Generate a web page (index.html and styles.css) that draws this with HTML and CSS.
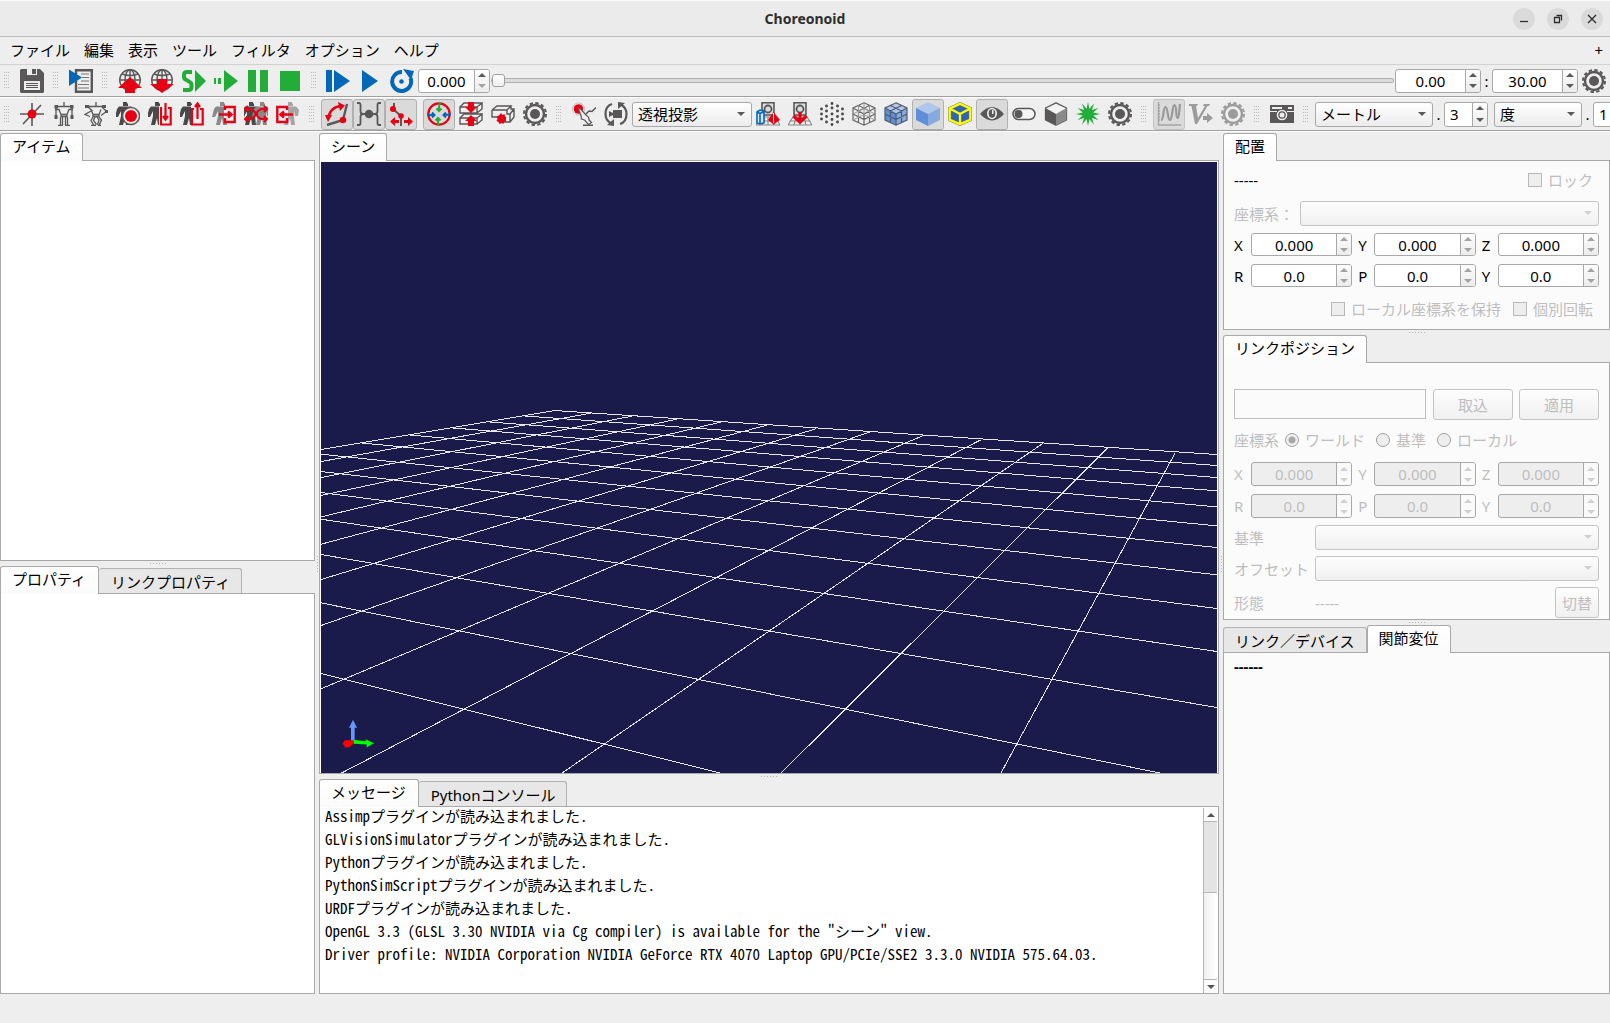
FILE: index.html
```html
<!DOCTYPE html>
<html lang="ja">
<head>
<meta charset="utf-8">
<title>Choreonoid</title>
<link rel="stylesheet" href="styles.css">
</head>
<body>
<svg class="defs" aria-hidden="true">
  <defs>
    <symbol id="save" viewBox="0 0 24 24"><path fill="#595757" d="M1 0H20L24 4V23l-1 1H1l-1-1V1z"/><path fill="#eee" d="M7 0h10v6H7zM4 12h16v9H4z"/><path fill="#595757" d="M12 0h4v5h-4zM6 14h12v1H6zM6 16h12v1H6zM6 18h12v1H6z"/></symbol>
    <symbol id="script" viewBox="0 0 24 24"><path fill="#eee" stroke="#595757" stroke-width="2.4" d="M7 1.2H22.8V22.8H7z"/><path stroke="#777" stroke-width="1.2" d="M12 5h8M13 8.500h7M12 12h8M9 15.500h11M9 19h11"/><path fill="#0068b7" d="M0 0.500 13 8.500 0 17z"/></symbol>
    <symbol id="globe" viewBox="0 0 24 24"><g fill="none" stroke="#595757" stroke-width="1.4"><circle cx="12" cy="11" r="10.300"/><ellipse cx="12" cy="11" rx="5" ry="10.300"/><path d="M12 0.500V21M2 11H22M4 5q8 3 16 0M4 17q8-3 16 0"/></g></symbol>
    <symbol id="globe-up" viewBox="0 0 24 24"><use href="#globe"/><path fill="#e60012" d="M12 8 24 19H17v5H7v-5H0z"/></symbol>
    <symbol id="globe-down" viewBox="0 0 24 24"><use href="#globe"/><path fill="#e60012" d="M7 10h10v5h7L12 24 0 15h7z"/></symbol>
    <symbol id="sim-start" viewBox="0 0 24 24"><path fill="#22ac38" d="M13 1 24 12 13 23z"/><path fill="none" stroke="#22ac38" stroke-width="4" d="M10 3H5Q2 3 2 6V8Q2 10 4.500 11L7 12.500Q9.500 13.500 9.500 16V18Q9.500 21 6.500 21H1"/></symbol>
    <symbol id="sim-restart" viewBox="0 0 24 24"><path fill="#22ac38" d="M0 9h2v6H0zM4 9h3v6H4zM10 1 24 12 10 23z"/></symbol>
    <symbol id="pause" viewBox="0 0 24 24"><path fill="#22ac38" d="M2 1h8v22H2zM14 1h8v22h-8z"/></symbol>
    <symbol id="stop" viewBox="0 0 24 24"><path fill="#22ac38" d="M2 2h20v20H2z"/></symbol>
    <symbol id="resume" viewBox="0 0 24 24"><path fill="#0068b7" d="M0 1h6v22H0zM8 1 24 12 8 23z"/></symbol>
    <symbol id="play" viewBox="0 0 24 24"><path fill="#0068b7" d="M4 1 20 12 4 23z"/></symbol>
    <symbol id="loop" viewBox="0 0 24 24"><path fill="none" stroke="#0068b7" stroke-width="4" d="M12 3A9.500 9.500 0 1 0 20.500 9"/><path fill="#0068b7" d="M13 0 24 2 21 11z"/><circle cx="11.500" cy="12.500" r="2.300" fill="#0068b7"/></symbol>
    <symbol id="gear" viewBox="0 0 24 24"><g fill="none" stroke="currentColor"><circle cx="12" cy="12" r="9" stroke-width="2.400"/><circle cx="12" cy="12" r="11" stroke-width="2" stroke-dasharray="3.400 2.360"/></g><circle cx="12" cy="12" r="5" fill="currentColor"/></symbol>
    <symbol id="origin" viewBox="0 0 24 24"><path stroke="#595757" stroke-width="1.600" d="M0 12H24M12 1V24M3 22 21 3"/><circle cx="12" cy="12" r="4.500" fill="#e60012"/></symbol>
    <symbol id="pose-std" viewBox="0 0 24 24"><g fill="none" stroke="#595757" stroke-width="1.300"><path d="M12 0v4M3 4.500H21M3 7.500h4l2 5h6l2-5h4M9 12.500v2h6v-2M4 4v11M20 4v11M8.500 15V23M15.500 15V23M10.500 15v8M13.500 15v8M6 23.300h5M13 23.300h5"/></g><path fill="#595757" d="M2.500 3h3.500v3.500H2.500zM18 3h3.500v3.500H18zM2.500 13h3v4h-3zM18.500 13h3v4h-3z"/></symbol>
    <symbol id="pose-init" viewBox="0 0 24 24"><g fill="none" stroke="#595757" stroke-width="1.300"><path d="M12 0v4M3 4.500H19M7 7.500l2 5h6l2-5M4 5 8 8.500 1 12.500l5 2M18 5l4.500 4.500L17 13.500M9 12.500v2h6v-2M9 15l-2 3.500 3 5M11 15l-1.500 3.500 3 4M15 15l2.500 3-2.500 5.500M13 15l2 3-1.500 5M7 23.300h5M14 23.300h3"/></g><path fill="#595757" d="M1 3h4v3H1zM18 3h4v3h-4zM21 8h3v3h-3z"/></symbol>
    <symbol id="body" viewBox="0 0 24 24"><path fill="currentColor" d="M9 0h4v4H9zM13 1l1 1v2h-1zM5 4.500H17L20 8l-1 6h-3V9l-1 5 1 9h-4l-1-7-2 7H5l2-9V9l-3 6H1L3 7z"/></symbol>
    <symbol id="pose-mem" viewBox="0 0 24 24"><g color="#4a4848"><use href="#body" x="-2"/></g><circle cx="15" cy="14" r="8.500" fill="#eee" stroke="#595757" stroke-width="1.500"/><circle cx="15" cy="14" r="6" fill="#e60012"/></symbol>
    <symbol id="pose-load" viewBox="0 0 24 24"><g color="#4a4848"><use href="#body" x="-2"/></g><path fill="#eee" d="M11 4h13v20H11z"/><path fill="none" stroke="#e60012" stroke-width="2.200" d="M14 6h-1V22.500H22.700V6H20M17.500 1V17M15 14l2.500 3.500L20 14"/></symbol>
    <symbol id="pose-save" viewBox="0 0 24 24"><g color="#4a4848"><use href="#body" x="-2"/></g><path fill="#eee" d="M11 3h13v21H11z"/><path fill="none" stroke="#e60012" stroke-width="2.200" d="M14 7h-2V22.500H22.700V7H20M17.500 17V2M15 5l2.500-3.500L20 5"/></symbol>
    <symbol id="copy-right" viewBox="0 0 24 24"><g color="#898989"><use href="#body" x="-1"/></g><path fill="#eee" d="M12 4h12v17H12z"/><path fill="none" stroke="#e60012" stroke-width="2.400" d="M13 8V5H22.700V20H13V16M7 12.500H19M16 9.500l3.500 3-3.500 3"/></symbol>
    <symbol id="mirror" viewBox="0 0 24 24"><g color="#4a4848"><use href="#body" x="-4"/></g><g color="#898989"><use href="#body" x="7"/></g><path fill="none" stroke="#e60012" stroke-width="2.200" d="M2 7h4q3 0 6 5t6 5h4M2 17h4q3 0 6-5t6-5h4M20 4l3 3-3 3M20 14l3 3-3 3M4 14l-3 3 3 3M4 4 1 7l3 3"/></symbol>
    <symbol id="copy-left" viewBox="0 0 24 24"><g color="#a5a5a5"><use href="#body" x="3"/></g><path fill="#eee" d="M0 4h12v17H0z"/><path fill="none" stroke="#e60012" stroke-width="2.400" d="M11 8V5H1.300V20H11V16M17 12.500H5M8 9.500l-3.500 3 3.500 3"/></symbol>
    <symbol id="fk" viewBox="0 0 24 24"><path fill="none" stroke="#595757" stroke-width="2.400" d="M2 23 18 18 22 2"/><path fill="none" stroke="#e60012" stroke-width="2.600" d="M3 17Q5 5 16 4"/><path fill="#e60012" d="M13 0 20 3.500 15 9zM0 13 7 13 3 20z"/><circle cx="18" cy="18" r="3.200" fill="#e60012"/></symbol>
    <symbol id="ik" viewBox="0 0 24 24"><circle cx="12" cy="12" r="4.300" fill="#595757"/><path fill="none" stroke="#595757" stroke-width="1.800" d="M0 1h2q1.500 0 1.500 2v6q0 3 2.500 3-2.500 0-2.500 3v6q0 2-1.500 2H0M24 1h-2q-1.500 0-1.500 2v6q0 3-2.500 3 2.500 0 2.500 3v6q0 2 1.500 2h2M5 12h3M16 12h3"/></symbol>
    <symbol id="penetration" viewBox="0 0 24 24"><path stroke="#595757" stroke-width="2" d="M4 7l8 7M12 15v9M5 7V1"/><g fill="#e60012"><circle cx="4" cy="7" r="3"/><circle cx="12" cy="14" r="2.800"/><path d="M1 19.500 6 15v3h4v3H6v3zM24 19.500 19 15v3h-4v3h4v3z"/></g></symbol>
    <symbol id="rotate-mode" viewBox="0 0 24 24"><circle cx="12" cy="12" r="10.700" fill="none" stroke="#e60012" stroke-width="2.200"/><g fill="none" stroke-width="2"><path stroke="#22ac38" d="M13.500 0q-2 4-1.500 8.500M9.500 6.500l2.500 2.500 2.500-2.500M11 24V16.500M8.500 18.500l2.500-2.500 2.500 2.500"/><path stroke="#0068b7" d="M0 13h7M5 10.500l2.500 2.500L5 15.500M24 12q-3 1-6.500 1M19 10.500l-2.500 2.500 2.500 2.500"/></g></symbol>
    <symbol id="collide" viewBox="0 0 24 24"><g fill="none" stroke="#595757" stroke-width="1.400"><path d="M1 5H18v6H1zM1 5l4-4H23l-5 4M23 1v6l-5 4M1 16H18v6H1zM1 16l4-4H23l-5 4M23 12v6l-5 4"/></g><path fill="#e60012" d="M9 0h6v5h3l-6 6-6-6h3zM9 24h6v-5h3l-6-6-6 6h3z"/></symbol>
    <symbol id="collide-cube" viewBox="0 0 24 24"><path fill="none" stroke="#595757" stroke-width="1.400" d="M1 8H16v4h3V20h-6M1 8v7h6M1 8l5-4H20l-4 4M20 4v3h3v8l-4 5M19 12l4-5"/><path fill="#e60012" d="M10 11l1.500 2 2-1 .5 2.500h1v5l-2 .5-.5 2-2-1-2 1-1-2-2-1 1-2-.5-3 2-.5z"/></symbol>
    <symbol id="drag" viewBox="0 0 24 24"><circle cx="6.500" cy="7" r="6" fill="#fff" stroke="#bbb"/><circle cx="6.500" cy="7" r="4.800" fill="#e60012"/><path fill="#eee" stroke="#595757" stroke-width="1.200" d="M6.500 7q1.500-1 3 1l5 5.500q3 1.500 2.500 4.500l2.500 2.500-3 2-4-4.500-3-1-.5-3.500z"/><path fill="none" stroke="#595757" stroke-width="1.500" d="M14 12l3-3 3 .5 4-4M11 23.300h10"/></symbol>
    <symbol id="turn" viewBox="0 0 24 24"><path fill="none" stroke="#595757" stroke-width="2.200" d="M8 2Q1.500 4 1.500 12q0 6 5 9M16 22q6.500-2 6.500-10 0-6-5-9"/><path fill="#595757" d="M3 23l7-6v7zM21 1l-7 6V0zM9 8h9v8H9zM5 9l4 2v2l-4 2z"/></symbol>
    <symbol id="cam" viewBox="0 0 24 24"><path fill="#ddd" stroke="#595757" stroke-width="1.600" d="M6 .8H18V13H6z"/><circle cx="12" cy="7" r="3.500" fill="none" stroke="#595757" stroke-width="1.800"/><path fill="none" stroke="#888" stroke-width="1.100" d="M5 15H19L24 23H0zM1.500 19H22.500M12 15v8M8 15l-2 8M16 15l2 8"/></symbol>
    <symbol id="cam-scene" viewBox="0 0 24 24"><use href="#cam"/><path fill="#dbe8f4" stroke="#0068b7" stroke-width="1.600" d="M1 10l3-2 4 1v12l-4 1-3-1zM4 11.500v10M1 10l3 1.500 4-2"/><path fill="#e60012" d="M17.500 10l6.500 8-6.500 4.500L12 18z"/><path stroke="#fff" stroke-width=".9" d="M17.500 11v10"/></symbol>
    <symbol id="cam-floor" viewBox="0 0 24 24"><use href="#cam"/><path fill="none" stroke="#e60012" stroke-width="3.200" d="M12 10V20M5.500 14l6.500 6 6.500-6"/></symbol>
    <symbol id="points" viewBox="0 0 24 24"><path fill="none" stroke="#4a4848" stroke-width="2.900" stroke-linecap="round" d="M12 1.500h0M6.500 4h0M17.500 4h0M1.500 7h0M12 6h0M22.500 7h0M6.500 9h0M17.500 9h0M1.500 12h0M12 12h0M22.500 12h0M6.500 14.500h0M17.500 14.500h0M1.500 17h0M12 17.500h0M22.500 17h0M6.500 20h0M17.500 20h0M12 22.500h0"/></symbol>
    <symbol id="wire" viewBox="0 0 24 24"><path fill="none" stroke="#666" stroke-width="1.200" d="M12 .8 23 6V18L12 23.200 1 18V6zM1 6 12 12 23 6M12 12V23M1 12l11 5.500L23 12M6.500 3.500l11 5.500v11.500M17.500 3.500 6.500 9v11.500"/><path fill="none" stroke="#999" d="M12 .8V12M1 18 12 12.500 23 18M1 12 12 6.500 23 12M6.500 3.500v11M17.500 3.500v11"/></symbol>
    <symbol id="solid-wire" viewBox="0 0 24 24"><path fill="#b0c7ec" d="M12 1 23 6 12 12 1 6z"/><path fill="#5f8fd8" d="M1 6l11 6v11L1 18z"/><path fill="#86a9de" d="M23 6l-11 6v11l11-5z"/><path fill="none" stroke="#4f5b70" stroke-width="1.200" d="M12 .8 23 6V18L12 23.200 1 18V6zM1 6 12 12 23 6M12 12V23M1 12l11 5.500L23 12M6.500 3.500l11 5.500v11.500M17.500 3.500 6.500 9v11.500"/></symbol>
    <symbol id="solid" viewBox="0 0 24 24"><path fill="#b0c7ec" d="M12 0 24 6 12 12 0 6z"/><path fill="#5f8fd8" d="M0 6l12 6v12L0 18z"/><path fill="#86a9de" d="M24 6l-12 6v12l12-6z"/></symbol>
    <symbol id="highlight" viewBox="0 0 24 24"><path fill="#2f64b5" stroke="#777" stroke-width="3.200" d="M12 1.800 22.300 6.500V17.700L12 22.300 1.700 17.700V6.500z"/><path fill="none" stroke="#ff0" stroke-width="2.300" d="M12 1.800 22.300 6.500V17.700L12 22.300 1.700 17.700V6.500zM1.700 6.500 12 12l10.300-5.500M12 12v10"/></symbol>
    <symbol id="eye" viewBox="0 0 24 24"><path fill="#595757" d="M0 12Q12-2 24 12 12 25 0 12z"/><ellipse cx="12" cy="11.500" rx="5" ry="5.800" fill="#eee"/><ellipse cx="12" cy="11.500" rx="3.300" ry="4.200" fill="#595757"/><path fill="#eee" d="M12 8h1.500v4H12z"/></symbol>
    <symbol id="toggle" viewBox="0 0 24 24"><rect x="1" y="6.500" width="22" height="11" rx="5.500" fill="#f4f4f4" stroke="#595757" stroke-width="1.500"/><circle cx="6.500" cy="12" r="4" fill="#595757"/></symbol>
    <symbol id="shade" viewBox="0 0 24 24"><path fill="#f4f4f4" stroke="#595757" stroke-width="1.300" stroke-linejoin="round" d="M12 .8 22.500 6V18L12 23.200 1.500 18V6z"/><path fill="#595757" d="M1.500 6 12 12v11.500L1.500 18z"/><path fill="#898989" d="M22.500 6 12 12v11l10.500-5z"/></symbol>
    <symbol id="burst" viewBox="0 0 24 24"><path fill="#22ac38" d="M24 12 17.300 13.400 22.400 18 15.900 15.900 18 22.400 13.400 17.300 12 24 10.600 17.300 6 22.400 8.100 15.900 1.600 18 6.700 13.400 0 12 6.700 10.600 1.600 6 8.100 8.100 6 1.600 10.600 6.700 12 0 13.400 6.700 18 1.600 15.900 8.100 22.400 6 17.300 10.600z"/></symbol>
    <symbol id="graph" viewBox="0 0 24 24"><path fill="none" stroke="#a5a5a5" stroke-width="1.400" d="M1.500 0V23H24M1 3h2M1 6h2M1 9h2M1 12h2M1 15h2M1 18h2"/><path fill="none" stroke="#999" stroke-width="2.200" d="M4 18C7 18 6 5 8.500 5s2 13 4.500 13S15 3 17.500 3s1 13 3 13S22 8 23 2"/></symbol>
    <symbol id="velocity" viewBox="0 0 24 24"><path fill="#9b9b9b" d="M0 2H9L8 4H7L9 16 16 4H14L15 2h6l-1 2h-1.500L8 22H6L2.500 4H0zM14 14h4v-3l6 5-6 5v-3h-4z"/></symbol>
    <symbol id="camera" viewBox="0 0 24 24"><path fill="#595757" d="M0 3H24V21H0z"/><path fill="#eee" d="M2 5h10v2H2zM18 5h4v2h-4z"/><circle cx="12" cy="13" r="5.300" fill="#eee"/><circle cx="12" cy="13" r="3.800" fill="#595757"/><circle cx="12" cy="13" r="2.500" fill="#eee"/><path stroke="#eee" d="M0 9.500h7M17 9.500h7"/></symbol>
  </defs>
</svg>

<header class="titlebar">
  <h1 class="title">Choreonoid</h1>
  <div class="window-buttons">
    <button class="win" aria-label="最小化"><svg viewBox="0 0 22 22"><path d="M7 13.500h8"/></svg></button>
    <button class="win" aria-label="元に戻す"><svg viewBox="0 0 22 22"><path d="M7.500 9.500h5v5h-5zM9.500 7.500h5v5"/></svg></button>
    <button class="win" aria-label="閉じる"><svg viewBox="0 0 22 22"><path d="M7 7l8 8M15 7l-8 8"/></svg></button>
  </div>
</header>

<nav class="menubar">
  <button>ファイル</button><button>編集</button><button>表示</button><button>ツール</button><button>フィルタ</button><button>オプション</button><button>ヘルプ</button>
  <button class="menu-add">+</button>
</nav>

<div class="toolbar">
  <div class="group"><i class="grip"></i><button class="tool" aria-label="保存"><svg><use href="#save"/></svg></button></div>
  <div class="group"><i class="grip"></i><button class="tool" aria-label="スクリプト実行"><svg><use href="#script"/></svg></button></div>
  <div class="group"><i class="grip"></i>
    <button class="tool" aria-label="ワールド保存"><svg><use href="#globe-up"/></svg></button>
    <button class="tool" aria-label="ワールド復元"><svg><use href="#globe-down"/></svg></button>
    <button class="tool" aria-label="シミュレーション開始"><svg><use href="#sim-start"/></svg></button>
    <button class="tool" aria-label="再開"><svg><use href="#sim-restart"/></svg></button>
    <button class="tool" aria-label="一時停止"><svg><use href="#pause"/></svg></button>
    <button class="tool" aria-label="停止"><svg><use href="#stop"/></svg></button>
  </div>
  <div class="group grow"><i class="grip"></i>
    <button class="tool" aria-label="先頭から再生"><svg><use href="#resume"/></svg></button>
    <button class="tool" aria-label="再生"><svg><use href="#play"/></svg></button>
    <button class="tool" aria-label="繰り返し"><svg><use href="#loop"/></svg></button>
    <span class="spin time down-off"><input aria-label="現在時刻" value="0.000"><span class="steps"><button aria-label="増"></button><button aria-label="減"></button></span></span>
    <input class="slider" type="range" min="0" max="30" value="0" aria-label="時刻">
    <span class="spin range"><input aria-label="開始時刻" value="0.00"><span class="steps"><button aria-label="増"></button><button aria-label="減"></button></span></span>
    <span class="sep">:</span>
    <span class="spin range"><input aria-label="終了時刻" value="30.00"><span class="steps"><button aria-label="増"></button><button aria-label="減"></button></span></span>
    <button class="tool" aria-label="時間設定"><svg><use href="#gear"/></svg></button>
  </div>
</div>

<div class="toolbar tall">
  <div class="group"><i class="grip"></i>
    <button class="tool" aria-label="原点移動"><svg><use href="#origin"/></svg></button>
    <button class="tool" aria-label="初期姿勢"><svg><use href="#pose-std"/></svg></button>
    <button class="tool" aria-label="標準姿勢"><svg><use href="#pose-init"/></svg></button>
    <button class="tool" aria-label="姿勢記憶"><svg><use href="#pose-mem"/></svg></button>
    <button class="tool" aria-label="姿勢格納"><svg><use href="#pose-load"/></svg></button>
    <button class="tool" aria-label="姿勢呼出"><svg><use href="#pose-save"/></svg></button>
    <button class="tool" aria-label="右へコピー"><svg><use href="#copy-right"/></svg></button>
    <button class="tool" aria-label="左右反転"><svg><use href="#mirror"/></svg></button>
    <button class="tool" aria-label="左へコピー"><svg><use href="#copy-left"/></svg></button>
  </div>
  <div class="group"><i class="grip"></i>
    <button class="tool on" aria-label="順運動学"><svg><use href="#fk"/></svg></button>
    <button class="tool on" aria-label="逆運動学"><svg><use href="#ik"/></svg></button>
    <button class="tool on" aria-label="関節可動域"><svg><use href="#penetration"/></svg></button>
    <button class="tool on spaced" aria-label="姿勢モード"><svg><use href="#rotate-mode"/></svg></button>
    <button class="tool" aria-label="干渉回避"><svg><use href="#collide"/></svg></button>
    <button class="tool" aria-label="干渉検出"><svg><use href="#collide-cube"/></svg></button>
    <button class="tool" aria-label="運動学設定"><svg><use href="#gear"/></svg></button>
  </div>
  <div class="group"><i class="grip"></i>
    <button class="tool" aria-label="編集モード"><svg><use href="#drag"/></svg></button>
    <button class="tool" aria-label="一人称視点"><svg><use href="#turn"/></svg></button>
    <span class="combo projection"><select aria-label="投影"><option>透視投影</option></select></span>
    <button class="tool" aria-label="全体表示"><svg><use href="#cam-scene"/></svg></button>
    <button class="tool" aria-label="床グリッド"><svg><use href="#cam-floor"/></svg></button>
    <button class="tool" aria-label="点"><svg><use href="#points"/></svg></button>
    <button class="tool" aria-label="ワイヤフレーム"><svg><use href="#wire"/></svg></button>
    <button class="tool" aria-label="ソリッドワイヤ"><svg><use href="#solid-wire"/></svg></button>
    <button class="tool on" aria-label="ソリッド"><svg><use href="#solid"/></svg></button>
    <button class="tool" aria-label="強調"><svg><use href="#highlight"/></svg></button>
    <button class="tool on" aria-label="可視モデル"><svg><use href="#eye"/></svg></button>
    <button class="tool" aria-label="切り替え"><svg><use href="#toggle"/></svg></button>
    <button class="tool" aria-label="シェーディング"><svg><use href="#shade"/></svg></button>
    <button class="tool" aria-label="干渉線"><svg><use href="#burst"/></svg></button>
    <button class="tool" aria-label="シーン設定"><svg><use href="#gear"/></svg></button>
  </div>
  <div class="group"><i class="grip"></i>
    <button class="tool on off" aria-label="グラフ" disabled><svg><use href="#graph"/></svg></button>
    <button class="tool off" aria-label="速度" disabled><svg><use href="#velocity"/></svg></button>
    <button class="tool off" aria-label="グラフ設定" disabled><svg><use href="#gear"/></svg></button>
  </div>
  <div class="group"><i class="grip"></i><button class="tool" aria-label="画像保存"><svg><use href="#camera"/></svg></button></div>
  <div class="group"><i class="grip"></i>
    <span class="combo length"><select aria-label="長さの単位"><option>メートル</option></select></span>
    <span class="sep">.</span>
    <span class="spin digits"><input aria-label="長さの桁数" value="3"><span class="steps"><button aria-label="増"></button><button aria-label="減"></button></span></span>
    <span class="combo angle"><select aria-label="角度の単位"><option>度</option></select></span>
    <span class="sep">.</span>
    <span class="spin digits"><input aria-label="角度の桁数" value="1"><span class="steps"><button aria-label="増"></button><button aria-label="減"></button></span></span>
  </div>
</div>

<main class="workspace">
  <div class="column">
    <div class="tabs"><button class="tab active">アイテム</button></div>
    <section class="pane white fill"></section>
    <i class="split-h"></i>
    <div class="tabs"><button class="tab active">プロパティ</button><button class="tab">リンクプロパティ</button></div>
    <section class="pane white fill"></section>
  </div>
  <i class="split-v"></i>
  <div class="column">
    <div class="tabs"><button class="tab active">シーン</button></div>
    <section class="pane white scene">
      <svg viewBox="33 -684 2688 1839" preserveAspectRatio="xMidYMid slice">
        <path class="grid" d="M735 64 2721 196M640 80 2721 229M535 98 2721 265M425 116 2721 305M295 137 2721 353M152 161 2721 410M33 195 2721 475M33 247 2721 557M33 310 2721 658M33 390 2721 787M33 496 2721 955M33 641 2568 1155M33 853 1244 1155"/>
        <path class="grid" d="M735 64 33 181M843 72 33 217M965 81 33 265M1100 90 33 319M1235 98 33 383M1370 108 33 465M1517 119 33 571M1680 128 33 709M1840 139 33 899M2012 152 88 1155M2198 163 751 1155M2393 176 1410 1155M2596 190 2071 1155"/>
        <path fill="#6496ff" d="M123 1058V1016H117L129 992 141 1016H134V1058z"/>
        <path fill="#0f0" d="M131 1052 167 1056V1050L192 1062 170 1075V1066L131 1064z"/>
        <path fill="#f00" d="M98 1064 104 1053 131 1053V1064L116 1075H106z"/>
      </svg>
    </section>
    <i class="split-h"></i>
    <div class="tabs"><button class="tab active">メッセージ</button><button class="tab">Pythonコンソール</button></div>
    <section class="pane white messages">
      <div class="log">
        <p>Assimpプラグインが読み込まれました.</p>
        <p>GLVisionSimulatorプラグインが読み込まれました.</p>
        <p>Pythonプラグインが読み込まれました.</p>
        <p>PythonSimScriptプラグインが読み込まれました.</p>
        <p>URDFプラグインが読み込まれました.</p>
        <p>OpenGL 3.3 (GLSL 3.30 NVIDIA via Cg compiler) is available for the "シーン" view.</p>
        <p>Driver profile: NVIDIA Corporation NVIDIA GeForce RTX 4070 Laptop GPU/PCIe/SSE2 3.3.0 NVIDIA 575.64.03.</p>
      </div>
      <div class="scrollbar"><button class="up" aria-label="上へ"></button><div class="thumb"></div><div class="track"></div><button class="down" aria-label="下へ"></button></div>
    </section>
  </div>
  <i class="split-v"></i>
  <div class="column">
    <div class="tabs"><button class="tab active">配置</button></div>
    <section class="pane form placement">
      <div class="row line"><span>-----</span><label class="check push"><input type="checkbox" disabled>ロック</label></div>
      <div class="row frame"><label class="dim" for="frame">座標系：</label><span class="combo dis"><select id="frame" disabled></select></span></div>
      <div class="xyz">
        <label for="px">X</label><span class="spin idle"><input id="px" value="0.000"><span class="steps"><button aria-label="増"></button><button aria-label="減"></button></span></span>
        <label for="py">Y</label><span class="spin idle"><input id="py" value="0.000"><span class="steps"><button aria-label="増"></button><button aria-label="減"></button></span></span>
        <label for="pz">Z</label><span class="spin idle"><input id="pz" value="0.000"><span class="steps"><button aria-label="増"></button><button aria-label="減"></button></span></span>
        <label for="pr">R</label><span class="spin idle"><input id="pr" value="0.0"><span class="steps"><button aria-label="増"></button><button aria-label="減"></button></span></span>
        <label for="pp">P</label><span class="spin idle"><input id="pp" value="0.0"><span class="steps"><button aria-label="増"></button><button aria-label="減"></button></span></span>
        <label for="pw">Y</label><span class="spin idle"><input id="pw" value="0.0"><span class="steps"><button aria-label="増"></button><button aria-label="減"></button></span></span>
      </div>
      <div class="row line options"><label class="check push"><input type="checkbox" disabled>ローカル座標系を保持</label><label class="check"><input type="checkbox" disabled>個別回転</label></div>
    </section>
    <i class="split-h"></i>
    <div class="tabs"><button class="tab active">リンクポジション</button></div>
    <section class="pane form link dim">
      <div class="row result"><textarea aria-label="結果" disabled></textarea><button class="btn wide" disabled>取込</button><button class="btn wide" disabled>適用</button></div>
      <div class="row line radios"><span>座標系</span><label class="check"><input type="radio" name="base" checked disabled>ワールド</label><label class="check"><input type="radio" name="base" disabled>基準</label><label class="check"><input type="radio" name="base" disabled>ローカル</label></div>
      <div class="xyz">
        <label for="lx">X</label><span class="spin dis"><input id="lx" value="0.000" disabled><span class="steps"><button aria-label="増" disabled></button><button aria-label="減" disabled></button></span></span>
        <label for="ly">Y</label><span class="spin dis"><input id="ly" value="0.000" disabled><span class="steps"><button aria-label="増" disabled></button><button aria-label="減" disabled></button></span></span>
        <label for="lz">Z</label><span class="spin dis"><input id="lz" value="0.000" disabled><span class="steps"><button aria-label="増" disabled></button><button aria-label="減" disabled></button></span></span>
        <label for="lr">R</label><span class="spin dis"><input id="lr" value="0.0" disabled><span class="steps"><button aria-label="増" disabled></button><button aria-label="減" disabled></button></span></span>
        <label for="lp">P</label><span class="spin dis"><input id="lp" value="0.0" disabled><span class="steps"><button aria-label="増" disabled></button><button aria-label="減" disabled></button></span></span>
        <label for="lw">Y</label><span class="spin dis"><input id="lw" value="0.0" disabled><span class="steps"><button aria-label="増" disabled></button><button aria-label="減" disabled></button></span></span>
      </div>
      <div class="fields">
        <label for="base">基準</label><span class="combo dis"><select id="base" disabled></select></span>
        <label for="offset">オフセット</label><span class="combo dis"><select id="offset" disabled></select></span>
        <span>形態</span><div class="row"><span>-----</span><button class="btn push" disabled>切替</button></div>
      </div>
    </section>
    <i class="split-h"></i>
    <div class="tabs"><button class="tab">リンク／デバイス</button><button class="tab active">関節変位</button></div>
    <section class="pane form fill"><strong>------</strong></section>
  </div>
</main>
<footer class="statusbar"></footer>
</body>
</html>
```
FILE: styles.css
```css
* { box-sizing: border-box; }

body {
  margin: 0;
  min-height: 100vh;
  display: flex;
  flex-direction: column;
  overflow: hidden;
  background: #eee;
  color: #000;
  font: 15px/22px "Noto Sans", "Noto Sans CJK JP", sans-serif;
}

button, input, select, textarea { font: inherit; color: inherit; margin: 0; }
button { padding: 0; border: 0; background: none; }
p { margin: 0; }
.defs { display: none; }

/* title bar */
.titlebar {
  height: 37px;
  display: grid;
  grid-template-columns: 1fr auto 1fr;
  align-items: center;
  background: #ebebeb;
  border-top: 1px solid #fafafa;
  border-bottom: 1px solid #bcbcbc;
}
.title { grid-column: 2; margin: 0; font-size: 14px; line-height: 20px; font-weight: 700; color: #2e2e2e; }
.window-buttons { display: flex; justify-content: flex-end; gap: 12px; padding-right: 7px; }
.win { width: 22px; height: 22px; border-radius: 11px; background: #dadada; }
.win svg { display: block; fill: none; stroke: #2e2e2e; stroke-width: 1.3; }

/* menu bar */
.menubar { height: 28px; display: flex; align-items: center; padding: 0 7px 2px 3px; border-bottom: 1px solid #d3d3d3; }
.menubar button { padding: 0 7px; white-space: nowrap; }
.menubar .menu-add { margin-left: auto; padding: 0; }

/* toolbars */
.toolbar { height: 32px; display: flex; overflow: hidden; border-bottom: 1px solid #a0a0a0; box-shadow: 0 1px #fff; margin-bottom: 1px; }
.toolbar.tall { height: 33px; }
.group { display: flex; align-items: center; flex: none; padding-right: 1px; }
.group.grow { flex: 1; padding-right: 0; }
.grip {
  width: 5px; height: 17px; margin: 0 7px 0 4px;
  background: #bbb;
  mask: repeating-linear-gradient(90deg, #000 0 1px, transparent 1px 2px), repeating-linear-gradient(#000 0 1px, transparent 1px 3px);
  mask-composite: intersect;
}
.grow .grip { margin-right: 6px; }
.tool { width: 32px; height: 31px; display: flex; align-items: center; justify-content: center; flex: none; color: #595757; border: 1px solid transparent; border-radius: 3px; }
.tool svg { width: 24px; height: 24px; }
.tool.on { background: #dadada; border-color: #b0b0b0; }
.tool.spaced { margin-left: 6px; }
.tool.off { color: #9b9b9b; }
.tool.on.off { border-color: #c4c4c4; }
.sep { width: 11px; text-align: center; }

/* number boxes */
.spin { display: flex; height: 24px; min-width: 0; border: 1px solid #a8a8a8; border-radius: 3px; background: #fff; overflow: hidden; }
.spin input { flex: 1; width: 0; min-width: 0; padding: 0; border: 0; background: none; text-align: center; }
.steps { width: 15px; flex: none; display: flex; flex-direction: column; border-left: 1px solid #a8a8a8; background: linear-gradient(#fdfdfd, #ececec); }
.steps button { flex: 1; display: flex; align-items: center; justify-content: center; color: #5a5a5a; }
.steps button::before { content: ""; border: 4px solid transparent; border-top: 0; border-bottom-color: currentColor; }
.steps button:last-child::before { border-top: 4px solid currentColor; border-bottom: 0; }
.down-off button:last-child, .idle .steps button { color: #a3a3a3; }
.spin.dis { background: #eee; color: #bebebe; }
.spin.dis .steps { background: #fafafa; }
.spin.dis .steps button { color: #d0d0d0; }
.time { width: 72px; }
.range { width: 86px; }
.digits { width: 44px; height: 25px; }
.digits input { text-align: left; padding-left: 5px; }

/* time slider */
.slider { flex: 1; height: 16px; margin: 0 1px; appearance: none; background: none; }
.slider::-webkit-slider-runnable-track { height: 5px; border: 1px solid #b0b0b0; border-radius: 2px; background: #dcdcdc; }
.slider::-webkit-slider-thumb { appearance: none; width: 13px; height: 13px; margin-top: -5px; border: 1px solid #a0a0a0; border-radius: 3px; background: linear-gradient(#fff, #f0f0f0); }

/* drop-downs */
.combo { position: relative; display: flex; height: 25px; }
.combo select { flex: 1; min-width: 0; appearance: none; padding: 0 20px 0 5px; border: 1px solid #a8a8a8; border-radius: 3px; background: linear-gradient(#fefefe, #ececec); line-height: 22px; }
.combo::after { content: ""; position: absolute; right: 7px; top: 10px; border: 4px solid transparent; border-bottom: 0; border-top-color: #5a5a5a; }
.combo.dis select { border-color: #c4c4c4; opacity: 1; background: linear-gradient(#fdfdfd, #f0f0f0); }
.combo.dis::after { border-top-color: #d0d0d0; }
.projection { width: 120px; }
.length { width: 118px; }
.angle { width: 88px; margin-left: 6px; }

/* docked views */
.workspace { flex: 1; display: grid; grid-template-columns: minmax(0, 315fr) 4px minmax(0, 900fr) 4px minmax(0, 387fr); padding-top: 1px; }
.statusbar { height: 29px; flex: none; }
.column { display: flex; flex-direction: column; min-width: 0; }
.tabs { height: 27px; flex: none; display: flex; align-items: flex-end; }
.tab { height: 25px; padding: 1px 11px 0; border: 1px solid #b2b2b2; border-bottom: 0; border-radius: 3px 3px 0 0; background: #e7e7e7; white-space: nowrap; }
.tab + .tab { border-left: 0; padding-left: 12px; }
.tab.active { height: 28px; margin-bottom: -1px; padding: 0 11px 3px; border-color: #a8a8a8; background: linear-gradient(#fff, #fbfbfb); z-index: 1; }
.tab.active:not(:last-child) { padding-right: 12px; }
.tab + .tab.active { border-left: 1px solid #a8a8a8; }
.pane { border: 1px solid #a8a8a8; background: #fbfbfb; min-height: 0; }
.pane.white { background: #fff; }
.fill { flex: 1; }
.split-h { height: 5px; flex: none; align-self: center; width: 16px; background: repeating-linear-gradient(90deg, #b5b5b5 0 1px, transparent 1px 3px) 0 2px / 100% 1px no-repeat; }
.split-v { align-self: center; width: 1px; height: 16px; justify-self: center; background: repeating-linear-gradient(#b5b5b5 0 1px, transparent 1px 3px); }

.scene { flex: 616 1 0; padding: 1px 1px 0; display: flex; }
.scene svg { flex: 1; width: 100%; height: 100%; background: #1a1a4b; }
.grid { fill: none; stroke: #e6e6e6; stroke-width: 1px; vector-effect: non-scaling-stroke; shape-rendering: crispEdges; }

.messages { flex: 186 1 0; display: flex; padding: 1px 1px 0 0; overflow: hidden; }
.log { flex: 1; min-width: 0; height: 100%; overflow: hidden; padding: 0 5px; margin-top: -4px; font-family: "Noto Sans Mono CJK JP", "Noto Sans CJK JP", monospace; line-height: 23px; }
.log p { white-space: pre; }
.scrollbar { width: 14px; display: flex; flex-direction: column; border-left: 1px solid #b5b5b5; background: linear-gradient(90deg, #f0f0f0, #fff); }
.scrollbar button { height: 14px; display: flex; align-items: center; justify-content: center; background: #fbfbfb; }
.scrollbar .up { border-bottom: 1px solid #b5b5b5; }
.scrollbar .down { border-top: 1px solid #b5b5b5; }
.scrollbar button::before { content: ""; border: 4px solid transparent; border-top: 0; border-bottom-color: #555; }
.scrollbar .down::before { border-top: 4px solid #555; border-bottom: 0; }
.thumb { flex: 69; background: #e4e4e4; border-bottom: 1px solid #b5b5b5; }
.track { flex: 86; }

/* forms */
.form { padding: 2px 10px; }
.row { display: flex; align-items: center; }
.line { height: 22px; }
.push { margin-left: auto; }
.dim, .check { color: #bebebe; }
.check { display: flex; align-items: center; gap: 6px; white-space: nowrap; }
.check input { appearance: none; width: 14px; height: 14px; border: 1px solid #b8b8b8; background: #eee; }
.check input[type="radio"] { border-color: #a0a0a0; border-radius: 7px; }
.check input:checked { background: radial-gradient(circle, #a8a8a8 0 3px, #eee 4px); }
.frame { margin-top: 10px; }
.frame label { width: 66px; }
.frame .combo { flex: 1; }
.xyz { display: grid; grid-template-columns: 17px 1fr 22px 1fr 22px 1fr; row-gap: 8px; align-items: center; }
.xyz label:nth-of-type(3n+2), .xyz label:nth-of-type(3n) { padding-left: 6px; }
.placement { padding: 8px 10px 9px; }
.placement .xyz { margin-top: 7px; }
.placement .xyz .spin { height: 23px; }
.options { margin-top: 11px; padding-right: 6px; gap: 12px; }
.placement .line:first-child { padding-right: 6px; }

.link { padding: 26px 10px 1px; }
.result { align-items: stretch; }
.result textarea { flex: 1; min-width: 0; height: 30px; margin-right: 7px; padding: 0; resize: none; border: 1px solid #bdbdbd; background: #fbfbfb; }
.btn { height: 31px; padding: 0 6px; border: 1px solid #c4c4c4; border-radius: 3px; background: linear-gradient(#fdfdfd, #f0f0f0); }
.btn.wide { width: 80px; }
.btn.wide + .btn.wide { margin-left: 6px; }
.radios { margin-top: 9px; gap: 11px; }
.radios .check:nth-child(2) { margin-left: -5px; }
.link .xyz { margin-top: 11px; }
.fields { display: grid; grid-template-columns: 81px 1fr; row-gap: 6px; align-items: center; margin-top: 7px; }
```
